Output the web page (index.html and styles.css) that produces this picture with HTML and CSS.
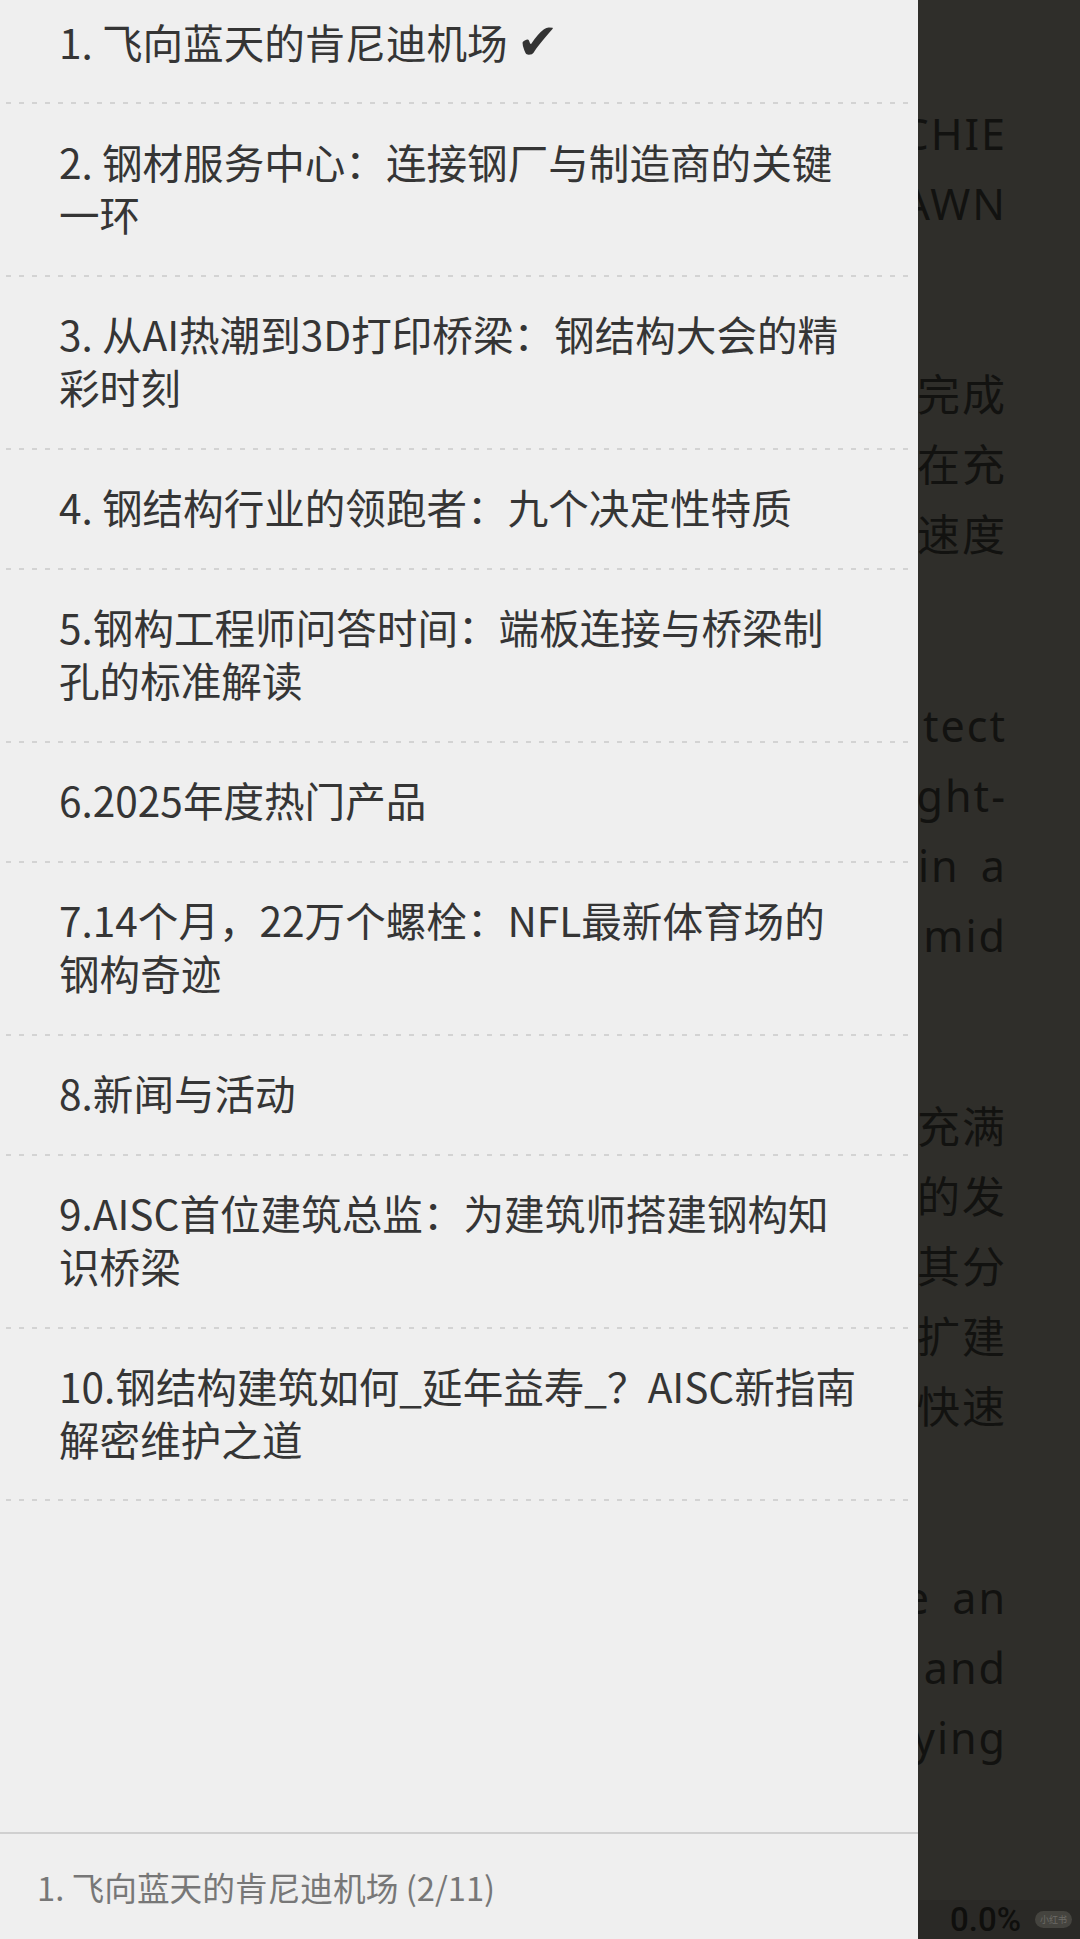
FILE: index.html
```html
<!DOCTYPE html>
<html lang="zh-CN">
<head>
<meta charset="utf-8">
<title>目录</title>
<link rel="stylesheet" href="styles.css">
</head>
<body>
<div class="screen">
  <main class="reader">
    <article class="article">
      <div class="para">
        <div class="line">FLYING HIGH AT JFK: ACHIE</div>
        <div class="line">A NEW TERMINAL AT DAWN</div>
      </div>
      <div class="para">
        <div class="line">新航站楼项目预计将完成</div>
        <div class="line">钢结构工程团队正在充</div>
        <div class="line">满信心地加快施工速度</div>
      </div>
      <div class="para">
        <div class="line">The project architect</div>
        <div class="line">designed a light-</div>
        <div class="line">filled terminal in a</div>
        <div class="line">busy airport amid</div>
      </div>
      <div class="para">
        <div class="line">这座机场一直充满</div>
        <div class="line">活力，航站楼的发</div>
        <div class="line">展历程及其分</div>
        <div class="line">阶段的扩建</div>
        <div class="line">推进了快速</div>
      </div>
      <div class="para">
        <div class="line">to become an</div>
        <div class="line">efficient and</div>
        <div class="line">welcoming flying</div>
      </div>
    </article>
    <footer class="status">
      <span class="progress">0.0%</span>
      <span class="badge">小红书</span>
    </footer>
  </main>

  <aside class="drawer">
    <nav class="toc">
      <ol class="toc-list">
        <li class="toc-item">1. 飞向蓝天的肯尼迪机场 <span class="check">✔</span></li>
        <li class="toc-item">2. 钢材服务中心：连接钢厂与制造商的关键<br>一环</li>
        <li class="toc-item">3. 从AI热潮到3D打印桥梁：钢结构大会的精<br>彩时刻</li>
        <li class="toc-item">4. 钢结构行业的领跑者：九个决定性特质</li>
        <li class="toc-item">5.钢构工程师问答时间：端板连接与桥梁制<br>孔的标准解读</li>
        <li class="toc-item">6.2025年度热门产品</li>
        <li class="toc-item">7.14个月，22万个螺栓：NFL最新体育场的<br>钢构奇迹</li>
        <li class="toc-item">8.新闻与活动</li>
        <li class="toc-item">9.AISC首位建筑总监：为建筑师搭建钢构知<br>识桥梁</li>
        <li class="toc-item">10.钢结构建筑如何_延年益寿_？AISC新指南<br>解密维护之道</li>
      </ol>
    </nav>
    <div class="drawer-footer">1. 飞向蓝天的肯尼迪机场 (2/11)</div>
  </aside>
</div>
</body>
</html>
```

FILE: styles.css
```css
html, body {
  margin: 0;
  padding: 0;
}

body {
  width: 1080px;
  height: 1939px;
  overflow: hidden;
  background: #2f2e2a;
  font-family: "Noto Sans CJK SC", "Noto Sans", sans-serif;
}

.screen {
  position: relative;
  width: 1080px;
  height: 1939px;
  overflow: hidden;
}

/* underlying reader page (dimmed) */
.reader {
  display: flex;
  flex-direction: column;
  height: 1939px;
  background: #2f2e2a;
}

.article {
  flex: 1;
  padding: 99px 73px 0 0;
  font-family: "Noto Sans", "Noto Sans CJK SC", sans-serif;
  font-size: 43px;
  color: #121210;
  letter-spacing: 2px;
}

.para + .para {
  margin-top: 121px;
}

.line {
  height: 70px;
  line-height: 70px;
  text-align: right;
  white-space: nowrap;
  word-spacing: 8px;
}

.status {
  height: 39px;
  background: #2a2926;
  display: flex;
  justify-content: flex-end;
  align-items: center;
  gap: 14px;
  padding-right: 8px;
}

.progress {
  font-family: "Roboto", "Noto Sans", sans-serif;
  font-size: 33px;
  font-weight: 500;
  color: #0f0f0d;
  line-height: 39px;
}

.badge {
  width: 37px;
  height: 17px;
  border-radius: 9px;
  background: #45443f;
  color: #6c6b66;
  font-size: 9px;
  line-height: 17px;
  text-align: center;
}

/* table of contents drawer */
.drawer {
  position: absolute;
  left: 0;
  top: 0;
  width: 918px;
  height: 1939px;
  background: #efefef;
  display: flex;
  flex-direction: column;
}

.toc {
  flex: 1;
  min-height: 0;
  overflow: hidden;
}

.toc-list {
  list-style: none;
  margin: -16px 0 0;
  padding: 0;
}

.toc-item {
  padding: 31.5px 20px 36.1px 59px;
  font-size: 40.6px;
  line-height: 52.6px;
  color: #353535;
  white-space: nowrap;
  background: repeating-linear-gradient(90deg, #d3d3d3 0 5px, transparent 5px 13px) 6px 100% / calc(100% - 12px) 2px no-repeat;
}

.check {
  font-family: "DejaVu Sans", sans-serif;
  font-size: 50px;
  line-height: 0;
  color: #333333;
}

.drawer-footer {
  height: 107px;
  box-sizing: border-box;
  border-top: 2px solid #d0d0d0;
  display: flex;
  align-items: center;
  padding: 0 0 0 37px;
  font-size: 32.7px;
  color: #777777;
  white-space: nowrap;
}
```
